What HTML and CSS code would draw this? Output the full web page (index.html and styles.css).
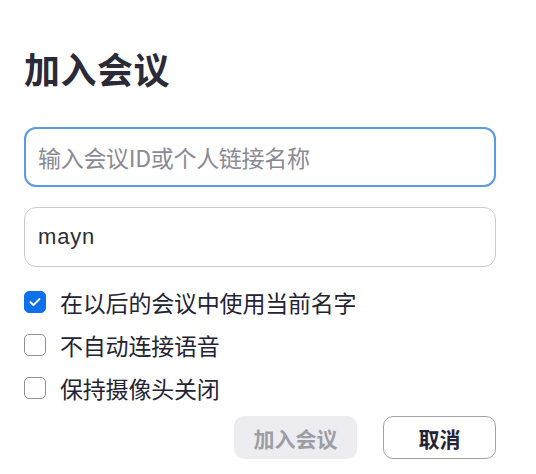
FILE: index.html
```html
<!DOCTYPE html>
<html lang="zh">
<head>
<meta charset="utf-8">
<title>加入会议</title>
<link rel="stylesheet" href="styles.css">
</head>
<body>
<div class="dialog">
  <h1 class="title">加入会议</h1>
  <div class="field focused"><span class="placeholder">输入会议ID或个人链接名称</span></div>
  <div class="field"><span class="value">mayn</span></div>
  <div class="options">
    <label class="option"><span class="box checked"><svg viewBox="0 0 22 22" width="22" height="22"><path d="M6 11.2l3.3 3.2 6.5-6.6" fill="none" stroke="#fff" stroke-width="2.2" stroke-linecap="round" stroke-linejoin="round"/></svg></span><span class="label">在以后的会议中使用当前名字</span></label>
    <label class="option"><span class="box"></span><span class="label">不自动连接语音</span></label>
    <label class="option"><span class="box"></span><span class="label">保持摄像头关闭</span></label>
  </div>
  <div class="actions">
    <button class="btn primary" disabled>加入会议</button>
    <button class="btn cancel">取消</button>
  </div>
</div>
</body>
</html>
```
FILE: styles.css
```css
html, body {
  margin: 0;
  padding: 0;
  background: #ffffff;
}
body {
  font-family: "Noto Sans CJK SC", "Noto Sans", "Liberation Sans", sans-serif;
  color: #232333;
}
.dialog {
  width: 472px;
  padding: 44px 0 0 24px;
}
.title {
  margin: 0 0 34px 0;
  font-size: 36px;
  line-height: 49px;
  font-weight: 700;
  color: #2a2a38;
  letter-spacing: 0.5px;
}
.field {
  box-sizing: border-box;
  height: 60px;
  border: 1.5px solid #c9c9d2;
  border-radius: 12px;
  display: flex;
  align-items: center;
  padding: 0 12px;
  margin-bottom: 20px;
}
.field.focused {
  border: 2px solid #5a9ae6;
}
.placeholder {
  font-size: 23px;
  color: #8a8a96;
  letter-spacing: -0.3px;
}
.value {
  font-family: "Liberation Sans", Arial, sans-serif;
  font-size: 22px;
  color: #2e2e33;
  letter-spacing: 0.8px;
  padding-left: 1px;
}
.options {
  display: flex;
  flex-direction: column;
  gap: 21px;
  margin-top: 24px;
}
.option {
  display: flex;
  align-items: center;
  height: 22px;
}
.box {
  box-sizing: border-box;
  width: 22px;
  height: 22px;
  border: 1.5px solid #8f8f99;
  border-radius: 5px;
  display: flex;
  align-items: center;
  justify-content: center;
  margin-right: 14px;
}
.box.checked {
  background: #0e71eb;
  border-color: #0e71eb;
}
.label {
  font-size: 23px;
  color: #232333;
  letter-spacing: -0.2px;
}
.actions {
  display: flex;
  justify-content: flex-end;
  gap: 26px;
  margin-top: 17px;
}
.btn {
  box-sizing: border-box;
  height: 43px;
  border-radius: 10px;
  font-family: "Noto Sans CJK SC", sans-serif;
  font-size: 21px;
  font-weight: 700;
  padding: 0;
}
.btn.primary {
  width: 123px;
  background: #ececf1;
  border: none;
  color: #9d9da6;
}
.btn.cancel {
  width: 113px;
  background: #ffffff;
  border: 1.5px solid #a2a2ab;
  color: #232333;
}
```
